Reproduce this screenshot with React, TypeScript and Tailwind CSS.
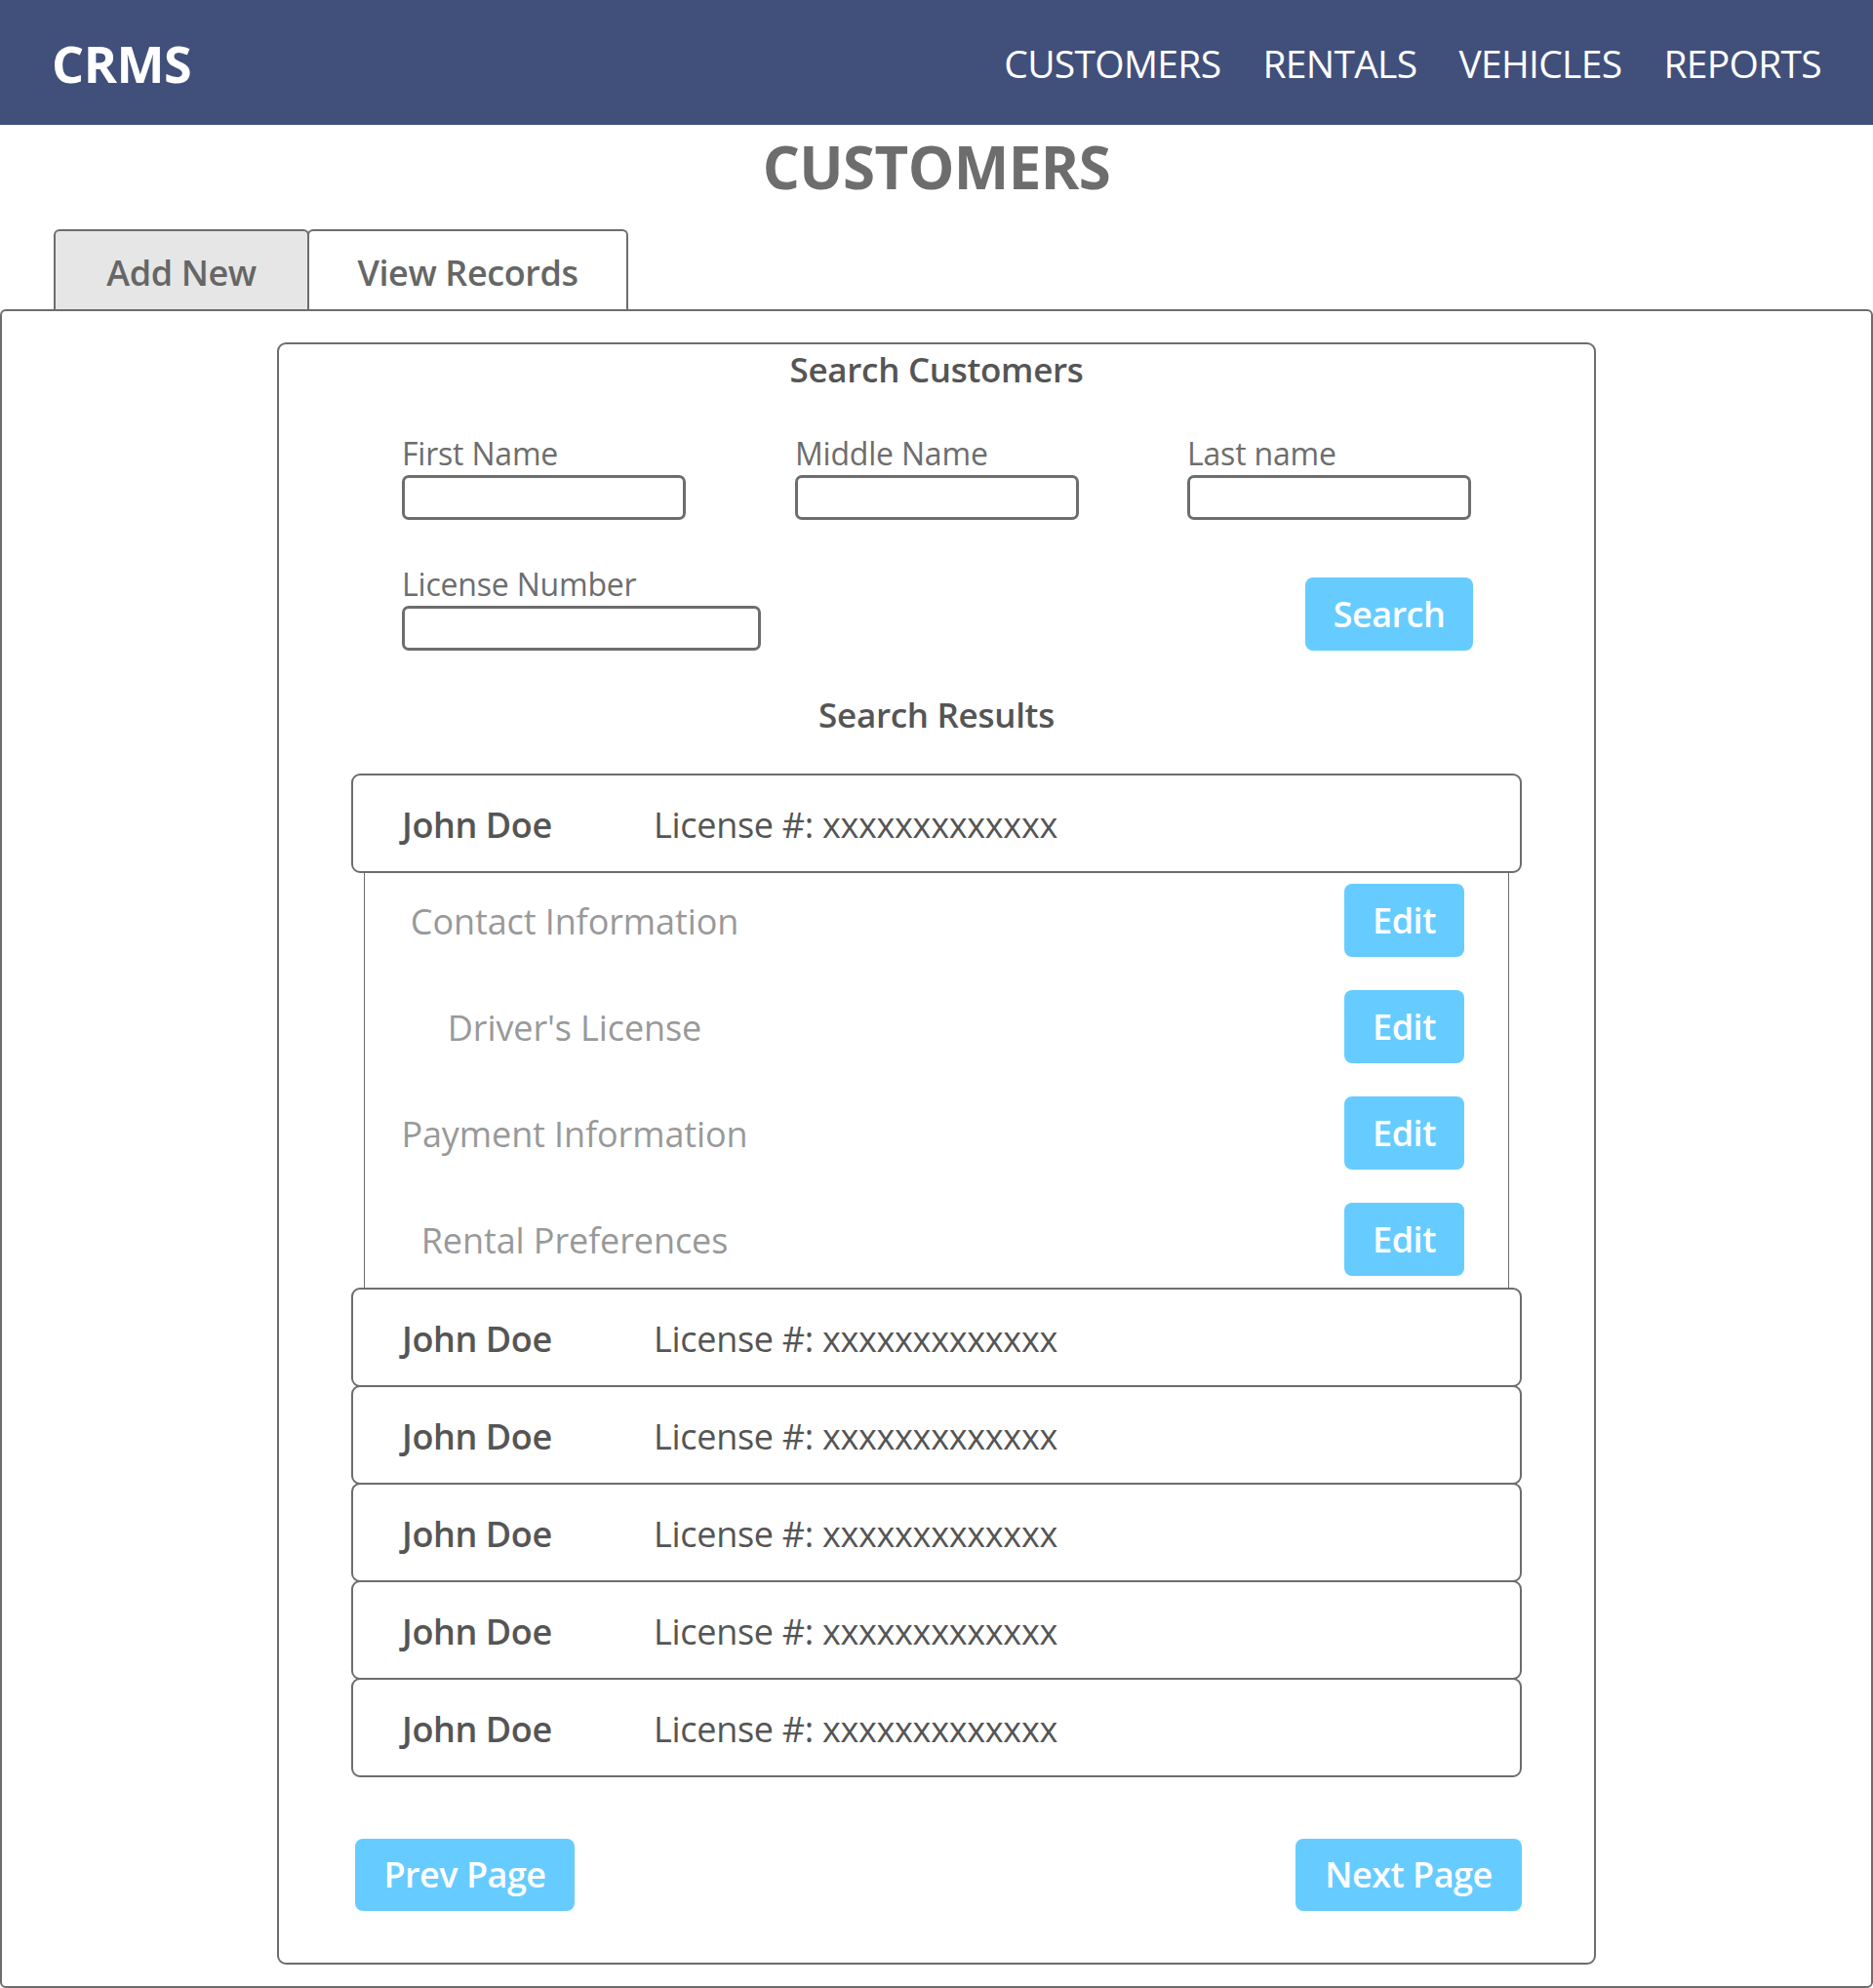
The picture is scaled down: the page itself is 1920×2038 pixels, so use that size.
import React from "react";

const font = { fontFamily: '"Open Sans", "Noto Sans", sans-serif' };

const navItems = ["CUSTOMERS", "RENTALS", "VEHICLES", "REPORTS"];

const sections = [
    "Contact Information",
    "Driver's License",
    "Payment Information",
    "Rental Preferences",
];

function Field({ label, width }: { label: string; width: string }) {
    return (
        <div className="flex flex-col">
            <label className="text-[32px] leading-[40px] text-[#6d6d6d] tracking-[-0.2px]">{label}</label>
            <div className={`mt-[2px] h-[46px] ${width} rounded-[7px] border-[3px] border-[#6d6d6d] bg-white`}></div>
        </div>
    );
}

function ResultRow({ className = "" }: { className?: string }) {
    return (
        <div className={`flex h-[102px] items-center rounded-[9px] border-2 border-[#6d6d6d] bg-white pl-[50px] ${className}`}>
            <span className="w-[258px] pt-[4px] text-[36px] font-semibold text-[#555555] tracking-[-0.4px]">John Doe</span>
            <span className="pt-[4px] text-[36px] font-medium text-[#555555] tracking-[-0.3px]">License #: xxxxxxxxxxxxx</span>
        </div>
    );
}

function BlueButton({ children, className = "" }: { children: React.ReactNode; className?: string }) {
    return (
        <button className={`flex items-center justify-center rounded-[8px] bg-[#66ccff] text-[36px] font-semibold text-white tracking-[-0.5px] ${className}`}>
            {children}
        </button>
    );
}

export default function App() {
    return (
        <div className="flex h-[2038px] w-[1920px] flex-col overflow-hidden bg-white" style={font}>
            {/* Header */}
            <header className="flex h-[128px] shrink-0 items-center justify-between bg-[#414f7b] pl-[53px] pr-[53px]">
                <div className="pt-[2px] text-[52px] font-bold text-white tracking-[-0.5px]">CRMS</div>
                <nav className="flex items-center gap-[43px] pt-[2px]">
                    {navItems.map((item) => (
                        <span key={item} className="text-[39px] text-white tracking-[-0.7px]">{item}</span>
                    ))}
                </nav>
            </header>

            {/* Page Title */}
            <h1 className="h-[86px] text-center text-[60px] font-bold leading-[86px] text-[#6d6d6d] tracking-[-0.6px]">CUSTOMERS</h1>

            {/* Tabs */}
            <div className="mt-[21px] flex pl-[55px]">
                <div className="flex h-[82px] w-[262px] items-center justify-center rounded-t-[6px] border-2 border-b-0 border-[#6d6d6d] bg-[#e6e6e6] pt-[6px] text-[36px] font-semibold text-[#666666] tracking-[-0.4px]">
                    Add New
                </div>
                <div className="-ml-[2px] flex h-[82px] w-[329px] items-center justify-center rounded-t-[6px] border-2 border-b-0 border-[#6d6d6d] bg-white pt-[6px] text-[36px] font-semibold text-[#666666] tracking-[-0.4px]">
                    View Records
                </div>
            </div>

            {/* Panel */}
            <div className="flex flex-1 flex-col rounded-[6px] border-2 border-[#6d6d6d] pb-[22px] pt-[32px]">
                <div className="mx-auto flex w-[1352px] flex-1 flex-col rounded-[9px] border-2 border-[#6d6d6d] px-[74px]">
                    <div className="pt-[4px] text-center text-[35px] font-semibold leading-[44px] text-[#555555] tracking-[-0.3px]">Search Customers</div>

                    {/* Search fields */}
                    <div className="mt-[44px] grid grid-cols-[403px_402px_291px] pl-[52px]">
                        <Field label="First Name" width="w-[291px]" />
                        <Field label="Middle Name" width="w-[291px]" />
                        <Field label="Last name" width="w-[291px]" />
                    </div>
                    <div className="mt-[46px] flex items-end justify-between pl-[52px] pr-[50px]">
                        <Field label="License Number" width="w-[368px]" />
                        <BlueButton className="h-[75px] w-[172px]">Search</BlueButton>
                    </div>

                    <div className="mt-[44px] text-center text-[35px] font-semibold leading-[44px] text-[#555555] tracking-[-0.3px]">Search Results</div>

                    {/* Results */}
                    <div className="mt-[38px] flex flex-col">
                        <ResultRow />
                        <div className="mx-[13px] -mt-[2px] flex flex-col gap-[34px] border-x border-[#6d6d6d] pb-[12px] pl-[37px] pr-[45px] pt-[13px]">
                            {sections.map((s) => (
                                <div key={s} className="flex h-[75px] items-center justify-between">
                                    <span className="w-[356px] pt-[3px] text-center text-[36px] font-medium text-[#999999] tracking-[-0.1px]">{s}</span>
                                    <BlueButton className="h-[75px] w-[123px]">Edit</BlueButton>
                                </div>
                            ))}
                        </div>
                        <ResultRow />
                        <ResultRow className="-mt-[2px]" />
                        <ResultRow className="-mt-[2px]" />
                        <ResultRow className="-mt-[2px]" />
                        <ResultRow className="-mt-[2px]" />
                    </div>

                    {/* Pagination */}
                    <div className="mt-[63px] flex justify-between pl-[4px]">
                        <BlueButton className="h-[74px] w-[225px]">Prev Page</BlueButton>
                        <BlueButton className="h-[74px] w-[232px]">Next Page</BlueButton>
                    </div>
                </div>
            </div>
        </div>
    );
}
